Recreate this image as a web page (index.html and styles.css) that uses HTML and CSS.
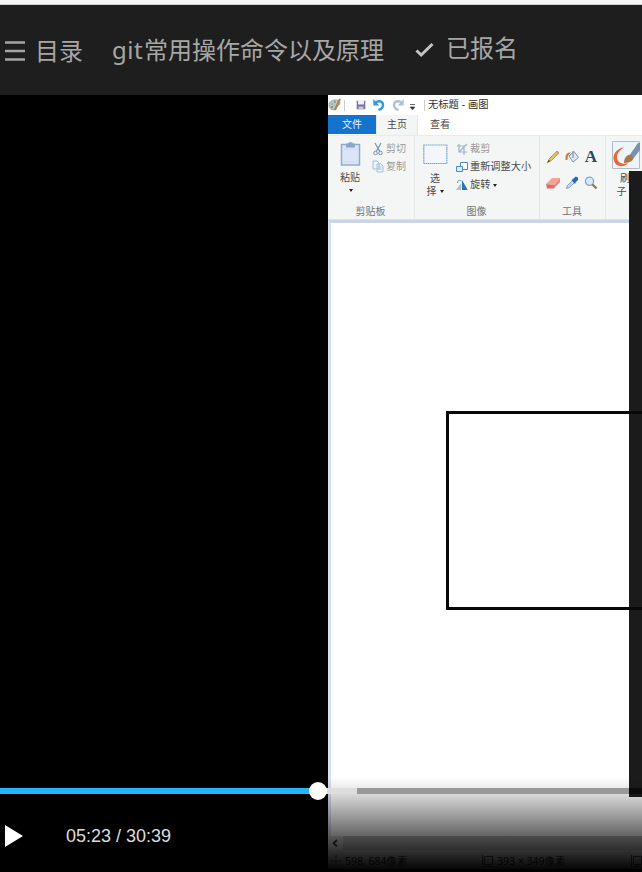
FILE: index.html
```html
<!DOCTYPE html>
<html lang="zh-CN">
<head>
<meta charset="utf-8">
<title>git常用操作命令以及原理</title>
<link rel="stylesheet" href="styles.css">
</head>
<body>
<header class="topbar">
  <div class="catalog"><svg class="menu-icon" width="20" height="20" viewBox="0 0 20 20"><path d="M0 1.5h20M0 10h20M0 18.5h20" stroke="#a5a5a5" stroke-width="2.3"/></svg><span>目录</span></div>
  <h1><span class="latin">git</span>常用操作命令以及原理</h1>
  <div class="enrolled"><svg width="19" height="16" viewBox="0 0 19 16"><path d="M1.5 8.5L6.2 13L17.5 2" fill="none" stroke="#c4c4c4" stroke-width="3"/></svg><span>已报名</span></div>
</header>
<main class="player">
  <section class="paint">
    <div class="titlebar">
      <svg class="palette" width="15" height="15" viewBox="0 0 15 15"><path d="M1 8C0 4 5 1 9 2s4 5 0 6c-3 1 0 3-3 4-3 0-5-2-5-4z" fill="#b9c4c9" stroke="#829399" stroke-width=".6"/><circle cx="4" cy="6" r="1" fill="#e2a337"/><circle cx="7" cy="4" r="1" fill="#57a4bd"/><circle cx="4" cy="9" r="1" fill="#5c9b65"/><path d="M12 1L7 12" stroke="#b87f4d" stroke-width="2"/></svg>
      <i class="sep"></i>
      <svg class="save" width="10" height="10" viewBox="0 0 10 10"><path d="M.7.7h8.6v8.6H.7z" fill="#7471a8"/><path d="M2 0h6v4.5H2z" fill="#eef0fa"/><path d="M2.5 6.5h5V9h-5z" fill="#c9c8df"/></svg>
      <svg class="undo" width="12" height="12" viewBox="0 0 12 12"><path d="M2 4C6 .8 10 2.5 10 6c0 2.5-1.5 4-4.500 5" fill="none" stroke="#3399da" stroke-width="2.4"/><path d="M.3 0v6.500h6z" fill="#3399da"/></svg>
      <svg class="redo" width="12" height="12" viewBox="0 0 12 12"><path d="M10 4C6 .8 2 2.5 2 6c0 2.5 1.5 4 4.500 5" fill="none" stroke="#b1c0d2" stroke-width="2.4"/><path d="M11.700 0v6.500h-6z" fill="#b1c0d2"/></svg>
      <svg class="more" width="5" height="7" viewBox="0 0 5 7"><path d="M0 .5h5M.2 3h4.6L2.5 5.8z" stroke="#444" stroke-width=".8" fill="#333"/></svg>
      <i class="sep"></i><span class="name">无标题 - 画图</span>
    </div>
    <nav class="tabs"><span class="file">文件</span><span class="home">主页</span><span class="view">查看</span></nav>
    <div class="ribbon">
      <div class="group clipboard">
        <div class="tools">
          <div class="paste"><svg width="22" height="26" viewBox="0 0 22 26"><path d="M2.500 2.5h18v20.5h-18z" fill="#dae6f7" stroke="#8eaad2" stroke-width="1.5"/><path d="M7 1.500h2.5V.2h4v1.300H16v4H7z" fill="#8ca5ca"/><path d="M4.500 7h14M4.500 20h14" stroke="#cddaf0"/></svg><span>粘贴</span><i class="arrow"></i></div>
          <div class="commands muted">
            <div><svg width="12" height="14" viewBox="0 0 12 14"><path d="M3 1l5 9M9 1L4 10" stroke="#7896bf" stroke-width="1.3"/><circle cx="3.5" cy="11" r="1.8" fill="none" stroke="#7896bf"/><circle cx="8.5" cy="11" r="1.8" fill="none" stroke="#7896bf"/></svg><span>剪切</span></div>
            <div><svg width="12" height="14" viewBox="0 0 12 14"><path d="M1 1h4l2 2v6H1zM5 4h4l2 2v6H5z" fill="#eef4fc" stroke="#a6bddc"/><path d="M6.5 7h3M6.5 9h3" stroke="#a6bddc"/></svg><span>复制</span></div>
          </div>
        </div><div class="caption">剪贴板</div>
      </div>
      <div class="group image">
        <div class="tools">
          <div class="select"><svg width="25" height="21" viewBox="0 0 25 21"><path d="M.8 1h23v18.5H.8z" fill="#f3f7fb" stroke="#78a9d4" stroke-width="1.2" stroke-dasharray="1.5 .4"/></svg><span>选</span><span>择<i class="arrow"></i></span></div>
          <div class="commands">
            <div class="muted"><svg width="12" height="13" viewBox="0 0 12 13"><path d="M3 1v8h8M1 3h7v9M3 9L11 1" fill="none" stroke="#9cb2d0" stroke-width="1.2"/></svg><span>裁剪</span></div>
            <div><svg width="12" height="13" viewBox="0 0 12 13"><path d="M4.500 1.500h7v7h-7z" fill="#fff" stroke="#4b8ebc"/><path d="M.5 5.500h6v5h-6z" fill="#dcebf8" stroke="#4b8ebc"/></svg><span>重新调整大小</span></div>
            <div><svg width="12" height="13" viewBox="0 0 12 13"><path d="M5 4v7H0z" fill="#b6bfc8"/><path d="M6 1v10h5.800z" fill="#2378b5"/><path d="M1.500 4c0-3 2-3 4-2" fill="none" stroke="#4a9bd0"/></svg><span>旋转</span><i class="arrow"></i></div>
          </div>
        </div><div class="caption">图像</div>
      </div>
      <div class="group toolbox">
        <div class="tool-grid">
          <svg viewBox="0 0 14 14"><path d="M1.5 12.5l2-4L11 1l2 2-7.5 7.5z" fill="#e4c45f" stroke="#9a7545" stroke-width=".7"/><path d="M1 13l2-3 1 1z" fill="#333"/><path d="M10 2l2-1 1 1-1 2z" fill="#e39494"/></svg>
          <svg viewBox="0 0 14 14"><path d="M4 6l5-4.500 4.500 6L8 12z" fill="#dce8f1" stroke="#7995af"/><path d="M8 8V1" stroke="#6086a8"/><path d="M.5 10C0 4 2 2 6 2.500 3 5 3 6 2.500 10z" fill="#d07e49"/></svg>
          <span class="letter-tool">A</span>
          <svg viewBox="0 0 14 14"><path d="M0 8l6-6h8l-6 7z" fill="#f5a399"/><path d="M0 8l8 1v3.500H1z" fill="#da6e66"/><path d="M8 9l6-7v4l-6 6.500z" fill="#e68880"/></svg>
          <svg viewBox="0 0 14 14"><path d="M1.5 12.5l1-3 5-5 2 2-5 5z" fill="#c6dced" stroke="#6a91b4" stroke-width=".8"/><path d="M6.5 4l3.5 4 1-2 2-2c1-2-1-4-3-3L8 3z" fill="#276bad"/></svg>
          <svg viewBox="0 0 14 14"><circle cx="5.5" cy="5.3" r="4.100" fill="#d5eafb" stroke="#87a6c2" stroke-width="1.3"/><path d="M8.5 8.5l4 4" stroke="#8e7050" stroke-width="2.1"/></svg>
        </div><div class="caption">工具</div>
      </div>
      <div class="group brushes"><svg width="28" height="28" viewBox="0 0 28 28"><path d="M.5.5h27v27H.5z" fill="#edf5fc" stroke="#aebcc7"/><path d="M12 6C4 8 0 14 2 20c2 6 10 7 14 2-7 2-11-1-11-6 0-5 4-7 7-10z" fill="#ec6532"/><path d="M17 15L26 2l2 0v7l-7 9z" fill="#7893ac"/><path d="M12 22c0-6 4-9 7-8 4 2 3 8-7 8z" fill="#a67945"/></svg><span>刷</span><span>子<i class="arrow"></i></span></div>
    </div>
    <div class="canvas"><div class="drawn-box"></div></div>
    <div class="scrollbar"><svg width="15" height="14" viewBox="0 0 15 14"><path d="M9 4L5.5 7.2L9 10.4" fill="none" stroke="#333" stroke-width="1.7"/></svg></div>
    <div class="status">
      <svg width="12" height="12" viewBox="0 0 12 12"><path d="M6 0v12M0 6h12" stroke="#444e56" stroke-dasharray="3 1"/></svg><span class="coords">598, 684像素</span>
      <svg width="12" height="12" viewBox="0 0 12 12"><path d="M3.500 1.500h8v8h-8zM1.500 0v11.500h9" fill="none" stroke="#444e56"/></svg><span class="size">393 × 349像素</span>
      <svg width="12" height="12" viewBox="0 0 12 12"><path d="M3.500 1.500h8v8h-8zM1.500 0v11.500h9" fill="none" stroke="#444e56"/></svg>
    </div>
  </section>
  <div class="side-panel"></div>
  <div class="controls">
    <div class="progress"><div class="played"></div><div class="buffered"></div><div class="remaining"></div><i class="thumb"></i></div>
    <div class="playback"><svg width="18" height="22" viewBox="0 0 18 22"><path d="M0 0l18 11L0 22z" fill="#fff"/></svg><time>05:23 / 30:39</time></div>
  </div>
</main>
</body>
</html>
```

FILE: styles.css
```css
* { box-sizing: border-box; }
body { margin: 0; width: 642px; height: 872px; overflow: hidden; background: #000; font-family: "Liberation Sans", "Noto Sans CJK SC", sans-serif; }
svg { display: block; flex: none; }
.topbar { height: 95px; display: flex; align-items: center; padding-left: 5px; background: #1e1e1e; border-top: 4px solid #f6f6f6; box-shadow: inset 0 1px #d0d0d0; color: #a7a7a7; font: 24px/36px "Noto Sans CJK SC", sans-serif; white-space: nowrap; }
.catalog { display: flex; align-items: center; gap: 10px; width: 107px; }
.menu-icon { margin-top: 3px; }
h1 { margin: 0; width: 303px; font-size: 24px; font-weight: 400; }
.latin { font-family: "Noto Sans", sans-serif; display: inline-block; width: 32px; letter-spacing: .5px; }
.enrolled { display: flex; align-items: center; gap: 12px; padding-bottom: 6px; }
.enrolled svg { margin-top: 7px; }
.player { position: relative; height: 777px; padding-left: 328px; background: #000; }
.paint { width: 314px; height: 774px; display: flex; flex-direction: column; background: #fff; overflow: hidden; color: #4b4b4b; font: 10px/12px "Liberation Sans", "Noto Sans CJK SC", sans-serif; white-space: nowrap; }
.titlebar { height: 20px; flex: none; display: flex; align-items: center; }
.sep { width: 1px; height: 11px; background: #ccc; margin-left: 1px; }
.save { margin-left: 11px; }
.undo, .redo { margin-left: 7px; }
.more { margin: 4px 8px 0 6px; }
.name { color: #303030; margin-left: 3px; font-size: 10.3px; }
.tabs { display: flex; height: 20px; flex: none; line-height: 19px; text-align: center; }
.file { width: 48px; background: #1473cd; color: #e8f3ff; height: 19px; }
.home { width: 42px; background: #f4f6f6; border: solid #e4e7e8; border-width: 0 1px; }
.view { width: 44px; }
.ribbon { display: flex; height: 85px; flex: none; background: #f4f6f6; border-top: 1px solid #e9ecec; border-bottom: 1px solid #dae1ea; }
.group { flex: none; display: flex; flex-direction: column; border-right: 1px solid #e4e8e9; }
.clipboard { width: 87px; }
.image { width: 125px; }
.toolbox { width: 66px; }
.brushes { width: 36px; }
.tools { display: flex; height: 69px; }
.caption { text-align: center; color: #737373; line-height: 14px; padding-right: 1px; }
.paste { width: 44px; padding-top: 6px; display: flex; flex-direction: column; align-items: center; }
.paste span { margin-top: 4px; }
.arrow { display: inline-block; border: 2px solid transparent; border-top: 3px solid #222; border-bottom: 0; vertical-align: 2px; margin-left: 3px; }
.paste .arrow { margin: 5px 0 0 2px; }
.commands { padding-top: 4px; line-height: 18px; }
.commands > div { display: flex; align-items: center; height: 18px; gap: 2px; }
.commands .arrow { margin-left: 1px; }
.muted { color: #999; }
.select { width: 41px; padding-top: 8px; display: flex; flex-direction: column; align-items: center; line-height: 13px; }
.select svg { margin-bottom: 7px; }
.select span { margin-right: 1px; }
.image .commands span { font-size: 10.2px; }
.tool-grid { display: grid; grid-template-columns: repeat(3, 14px); gap: 12px 5px; padding: 14px 0 0 6px; height: 69px; align-content: start; }
.tool-grid svg { width: 14px; height: 14px; }
.letter-tool { height: 14px; font: bold 17px/14px "Liberation Serif", serif; color: #284767; text-align: center; }
.brushes { align-items: center; padding: 5px 2px 0 6px; line-height: 13px; border: 0; }
.brushes svg { margin-bottom: 3px; }
.brushes span { margin-right: 2px; }
.canvas { flex: 1; padding: 188px 0 0 115px; border-top: 3px solid #cbd5e6; border-left: 3px solid #d8e0ed; background: #fff; }
.drawn-box { height: 199px; border: 3px solid #070707; border-right: 0; }
.scrollbar { height: 14px; flex: none; background: #c4c4c4; }
.scrollbar svg { background: #ddd; }
.status { display: flex; align-items: center; height: 19px; flex: none; padding-left: 2px; padding-top: 3px; background: #d6d6d6; color: #222; font: 10.5px/14px "Noto Sans", "Noto Sans CJK SC", sans-serif; }
.coords { margin-left: 3px; width: 136px; }
.size { margin-left: 4px; width: 133px; }
.side-panel { position: absolute; left: 629px; top: 76px; width: 13px; height: 626px; background: linear-gradient(#1b1b1b 0 240px, #080808 240px 243px, #1b1b1b 243px 436px, #080808 436px 439px, #1b1b1b 439px); }
.controls { position: absolute; left: 0; right: 0; bottom: 0; height: 95px; padding-top: 11px; background: linear-gradient(to bottom, transparent 0, rgba(0,0,0,.08) 11px, rgba(0,0,0,.15) 17px, rgba(0,0,0,.6) 58px, rgba(0,0,0,.82) 78px, #000 95px); }
.progress { position: relative; display: flex; height: 6px; }
.played { width: 318px; background: #24b5ff; }
.buffered { width: 39px; background: #ddd; }
.remaining { flex: 1; background: linear-gradient(90deg, #999 0 272px, #0b0b0b 272px); }
.thumb { position: absolute; left: 309px; top: -6px; width: 18px; height: 18px; border-radius: 50%; background: #fff; }
.playback { display: flex; align-items: center; height: 84px; padding-left: 5px; color: #ddd; font: 18px/22px "Liberation Sans", sans-serif; }
.playback time { margin-left: 43px; }
```
